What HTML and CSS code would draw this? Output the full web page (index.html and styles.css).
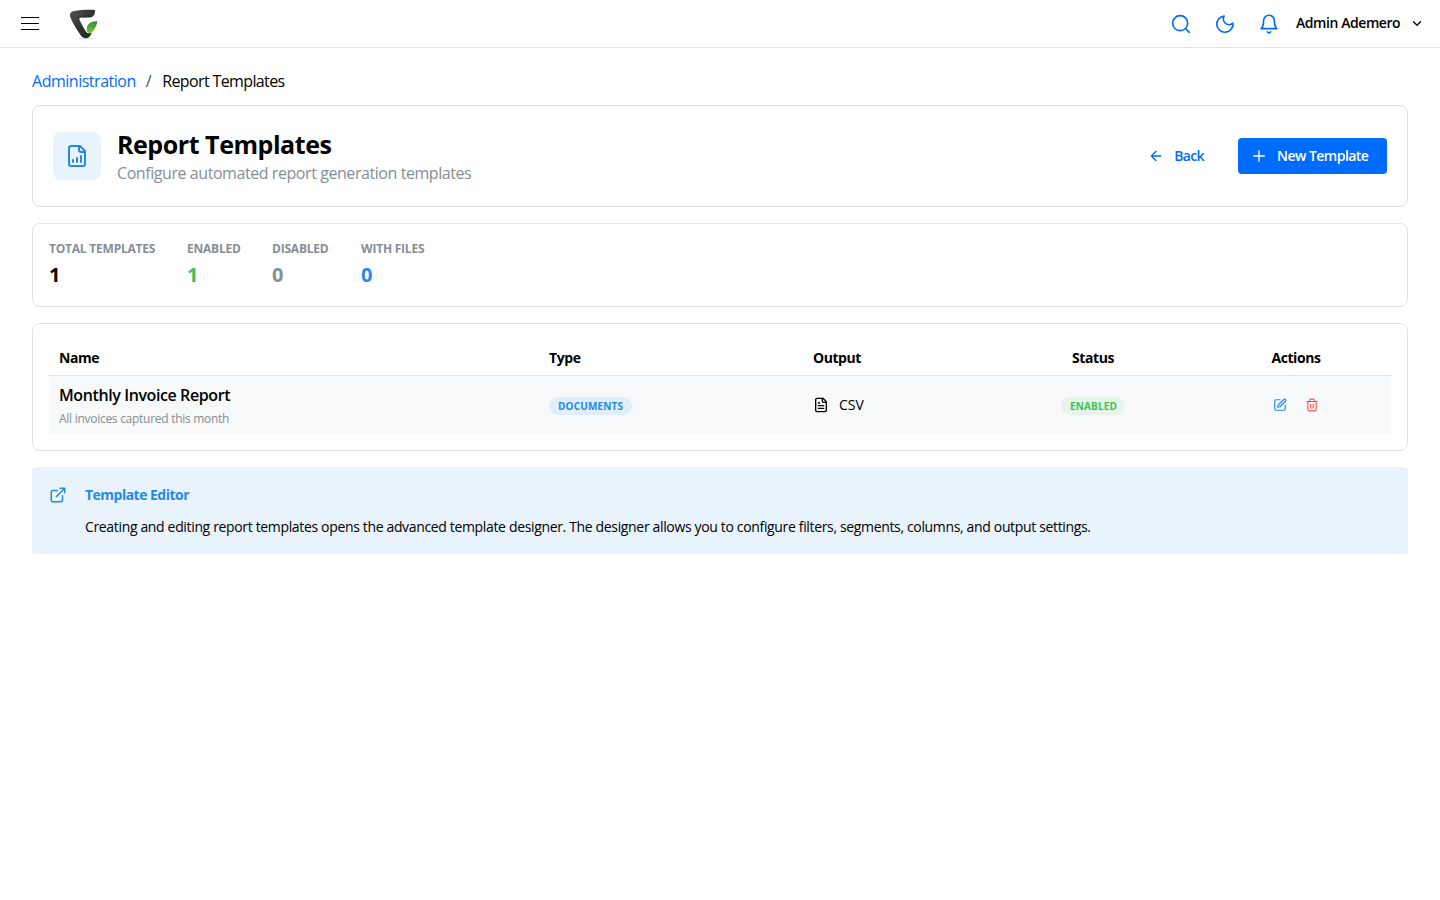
FILE: index.html
```
<!DOCTYPE html>
<html lang="en">
<head>
  <meta charset="UTF-8">
  <meta name="viewport" content="width=device-width, initial-scale=1.0">
  <title>Report Templates</title>
  <link rel="stylesheet" href="styles.css">
</head>
<body>
  <header class="topbar">
    <button class="burger" aria-label="Menu"><span></span><span></span><span></span></button>
    <svg class="logo" viewBox="0 0 32 32" aria-hidden="true">
      <defs>
        <linearGradient id="dark" x1="0" y1="0" x2="1" y2="1">
          <stop offset="0" stop-color="#555"/>
          <stop offset=".5" stop-color="#333"/>
          <stop offset="1" stop-color="#222"/>
        </linearGradient>
        <linearGradient id="leaf" x1="0" y1="0" x2="0" y2="1">
          <stop offset="0" stop-color="#2f8a3c"/>
          <stop offset="1" stop-color="#7cc52c"/>
        </linearGradient>
      </defs>
      <ellipse cx="18" cy="30.6" rx="9" ry="0.8" fill="#e4e4e4"/>
      <path fill="url(#dark)" d="M27 2C20 1.500 12 2 6 3C2.500 3.600 1.200 6.500 2.400 9.500C4.500 15 9 22 13 27.800C15.300 31 19.500 31 21.800 28.200L24.300 24.500C21.500 26 19 25.500 17.900 23.500C15.500 20 13 15 11.600 12C11 10.700 11.500 9.900 12.700 9.800L22 9.500C25.500 9.200 27.500 6 27 2Z"/>
      <path fill="url(#leaf)" d="M29.400 13.300C24.500 13.300 20.300 15.200 19.200 18.500C18.300 21.200 18.500 24 20.300 24.800C22.800 25.600 24.800 23.800 26.200 21.500C27.900 18.800 29.200 16 29.400 13.300Z"/>
    </svg>
    <div class="topbar-right">
      <svg class="icon icon-20 top-icon" viewBox="0 0 24 24"><circle cx="11" cy="11" r="9"/><path d="m22 22-4.600-4.600"/></svg>
      <svg class="icon icon-20 top-icon" viewBox="0 0 24 24"><path d="M11 2.500a6.800 6.800 0 0 0 10.500 8.400A9.700 9.700 0 1 1 11 2.500Z"/></svg>
      <svg class="icon icon-20 top-icon" viewBox="0 0 24 24"><path d="M18.500 8A6.500 6.500 0 0 0 5.500 8c0 7-3 9.500-3 9.500h19s-3-2.500-3-9.500"/><path d="M14 21.500a2.300 2.300 0 0 1-4 0"/></svg>
      <span class="user-name">Admin Ademero</span>
      <svg class="icon icon-12 user-chevron" viewBox="0 0 24 24"><path d="m5 7.500 7 7 7-7"/></svg>
    </div>
  </header>

  <main class="page">
    <nav class="breadcrumbs">
      <a href="#">Administration</a>
      <span class="separator">/</span>
      <span class="current">Report Templates</span>
    </nav>

    <section class="card page-header">
      <div class="header-icon">
        <svg class="icon icon-24" viewBox="0 0 24 24"><path d="M15 2H6a2 2 0 0 0-2 2v16a2 2 0 0 0 2 2h12a2 2 0 0 0 2-2V7Z"/><path d="M14 2v4a2 2 0 0 0 2 2h4M8 18v-2M12 18v-4M16 18v-6"/></svg>
      </div>
      <div class="header-text">
        <h1>Report Templates</h1>
        <p>Configure automated report generation templates</p>
      </div>
      <div class="header-actions">
        <button class="btn btn-subtle">
          <svg class="icon icon-16" viewBox="0 0 24 24"><path d="m12 19-7-7 7-7M19 12H5"/></svg>
          <span>Back</span>
        </button>
        <button class="btn btn-primary">
          <svg class="icon icon-16" viewBox="0 0 24 24"><path d="M4 12h16M12 4v16"/></svg>
          <span>New Template</span>
        </button>
      </div>
    </section>

    <section class="card stats">
      <div class="stat stat-total">
        <div class="stat-label">Total Templates</div>
        <div class="stat-value">1</div>
      </div>
      <div class="stat stat-enabled">
        <div class="stat-label">Enabled</div>
        <div class="stat-value green">1</div>
      </div>
      <div class="stat stat-disabled">
        <div class="stat-label">Disabled</div>
        <div class="stat-value gray">0</div>
      </div>
      <div class="stat stat-files">
        <div class="stat-label">With Files</div>
        <div class="stat-value blue">0</div>
      </div>
    </section>

    <section class="card table-card">
      <table class="table">
        <thead>
          <tr>
            <th class="col-name">Name</th>
            <th class="col-type">Type</th>
            <th class="col-output">Output</th>
            <th class="col-status">Status</th>
            <th class="col-actions">Actions</th>
          </tr>
        </thead>
        <tbody>
          <tr>
            <td>
              <div class="row-name">Monthly Invoice Report</div>
              <div class="row-desc">All invoices captured this month</div>
            </td>
            <td><span class="badge badge-blue">Documents</span></td>
            <td>
              <div class="output">
                <svg class="icon icon-16" viewBox="0 0 24 24"><path d="M15 2H6a2 2 0 0 0-2 2v16a2 2 0 0 0 2 2h12a2 2 0 0 0 2-2V7Z"/><path d="M14 2v4a2 2 0 0 0 2 2h4M10 9H8M16 13H8M16 17H8"/></svg>
                <span>CSV</span>
              </div>
            </td>
            <td class="center"><span class="badge badge-green">Enabled</span></td>
            <td class="center">
              <div class="actions">
                <svg class="icon icon-14 edit" viewBox="0 0 24 24"><path d="M12 3H5a2 2 0 0 0-2 2v14a2 2 0 0 0 2 2h14a2 2 0 0 0 2-2v-7"/><path d="M18.400 2.600a2.100 2.100 0 0 1 3 3l-9 9a2 2 0 0 1-.9.5l-2.900.8a.5.5 0 0 1-.6-.6l.8-2.900a2 2 0 0 1 .5-.9z"/></svg>
                <svg class="icon icon-14 delete" viewBox="0 0 24 24"><path d="M3 6h18M19 6v14a2 2 0 0 1-2 2H7a2 2 0 0 1-2-2V6M8 6V4a2 2 0 0 1 2-2h4a2 2 0 0 1 2 2v2M10 11v6M14 11v6"/></svg>
              </div>
            </td>
          </tr>
        </tbody>
      </table>
    </section>

    <section class="alert">
      <svg class="icon icon-18" viewBox="0 0 24 24"><path d="M15 3h6v6M10 14 21 3M18 13v6a2 2 0 0 1-2 2H5a2 2 0 0 1-2-2V8a2 2 0 0 1 2-2h6"/></svg>
      <div class="alert-body">
        <div class="alert-title">Template Editor</div>
        <div class="alert-text">Creating and editing report templates opens the advanced template designer. The designer allows you to configure filters, segments, columns, and output settings.</div>
      </div>
    </section>
  </main>
</body>
</html>
```

FILE: styles.css
```
* {
  box-sizing: border-box;
}

body {
  margin: 0;
  font-family: "Open Sans", "Noto Sans", sans-serif;
  font-size: 16px;
  letter-spacing: -0.027em;
  color: #000;
  background-color: #fff;
}

h1,
p {
  margin: 0;
}

button {
  font-family: inherit;
  letter-spacing: inherit;
  border: none;
  background: none;
  padding: 0;
  cursor: pointer;
}

/* Icons */
.icon {
  flex: none;
  display: block;
  fill: none;
  stroke: currentColor;
  stroke-width: 2;
  stroke-linecap: round;
  stroke-linejoin: round;
}

.icon-12 { width: 12px; height: 12px; }
.icon-14 { width: 14px; height: 14px; }
.icon-16 { width: 16px; height: 16px; }
.icon-18 { width: 18px; height: 18px; }
.icon-20 { width: 20px; height: 20px; }
.icon-24 { width: 24px; height: 24px; }

/* Top bar */
.topbar {
  display: flex;
  align-items: center;
  height: 48px;
  padding: 0 17px 0 21px;
  border-bottom: 1px solid #dee2e6;
}

.burger {
  display: flex;
  flex-direction: column;
  gap: 5px;
  width: 18px;
}

.burger span {
  height: 1px;
  background-color: #000;
}

.logo {
  width: 32px;
  height: 32px;
  margin-left: 29px;
}

.topbar-right {
  display: flex;
  align-items: center;
  margin-left: auto;
}

.top-icon {
  margin-right: 24px;
  color: #006bff;
}

.top-icon:nth-child(3) {
  margin-right: 17px;
}

.user-name {
  width: 105px;
  padding-bottom: 2px;
  font-size: 14px;
  font-weight: 600;
  white-space: nowrap;
}

.user-chevron {
  margin-left: 10px;
  stroke-width: 2.5;
}

/* Page */
.page {
  display: flex;
  flex-direction: column;
  gap: 16px;
  padding: 21px 32px;
}

.breadcrumbs {
  display: flex;
  align-items: center;
  height: 24px;
  margin-bottom: -4px;
  letter-spacing: -0.03em;
  white-space: nowrap;
}

.breadcrumbs a {
  color: #006bff;
  text-decoration: none;
}

.separator {
  margin: 0 11px 0 10px;
  color: #495057;
}

.current {
  letter-spacing: -0.039em;
}

.card {
  border: 1px solid #dee2e6;
  border-radius: 8px;
}

.page-header {
  display: flex;
  align-items: center;
  height: 102px;
  padding: 0 20px;
}

.header-icon {
  display: flex;
  align-items: center;
  justify-content: center;
  width: 48px;
  height: 48px;
  margin-right: 16px;
  border-radius: 8px;
  color: #228be6;
  background-color: #e8f3fc;
}

.header-text h1 {
  font-size: 25px;
  font-weight: 700;
  letter-spacing: -0.018em;
  line-height: 33px;
}

.header-text p {
  margin-top: 1px;
  line-height: 22px;
  color: #868e96;
}

.header-actions {
  display: flex;
  gap: 16px;
  margin-left: auto;
}

.btn {
  display: flex;
  align-items: center;
  height: 36px;
  padding: 0 18px;
  border-radius: 4px;
  font-size: 14px;
  font-weight: 600;
  white-space: nowrap;
}

.btn span {
  padding-bottom: 1px;
}

.btn-subtle {
  letter-spacing: -0.045em;
  color: #006bff;
}

.btn-subtle .icon {
  margin-right: 10px;
}

.btn-primary {
  width: 149px;
  padding: 0 13px;
  letter-spacing: -0.038em;
  color: #fff;
  background-color: #006bff;
}

.btn-primary .icon {
  margin-right: 10px;
}

/* Stats */
.stats {
  display: flex;
  gap: 32px;
  height: 84px;
  padding: 16px;
}

.stat-label {
  font-size: 12px;
  font-weight: 700;
  letter-spacing: -0.018em;
  line-height: 17px;
  text-transform: uppercase;
  white-space: nowrap;
  color: #868e96;
}

.stat-value {
  margin-top: 2px;
  font-size: 20px;
  font-weight: 700;
  line-height: 31px;
}

.stat-total { width: 106px; }
.stat-enabled { width: 53px; }
.stat-disabled { width: 57px; }

.green { color: #40c057; }
.gray { color: #868e96; }
.blue { color: #228be6; }

/* Table */
.table-card {
  height: 128px;
  padding: 16px;
}

.table {
  width: 100%;
  table-layout: fixed;
  border-collapse: separate;
  border-spacing: 0;
}

.table th {
  height: 36px;
  padding: 0 10px;
  border-bottom: 1px solid #dee2e6;
  font-size: 14px;
  font-weight: 700;
  text-align: left;
}

.table td {
  height: 58px;
  padding: 0 10px;
  background-color: #f8f9fa;
}

.col-name { width: 490px; }
.col-type { width: 264px; }
.col-output { width: 182px; }
.col-status { width: 216px; }

.table .col-status,
.table .col-actions,
.center {
  text-align: center;
}

.row-name {
  padding-top: 2px;
  font-weight: 600;
  letter-spacing: -0.025em;
  line-height: 25px;
}

.row-desc {
  font-size: 12px;
  letter-spacing: -0.023em;
  line-height: 21px;
  color: #868e96;
}

.badge {
  display: inline-block;
  height: 18px;
  margin-bottom: 1px;
  padding: 0 9px;
  border-radius: 9px;
  font-size: 10px;
  font-weight: 700;
  letter-spacing: 0.015em;
  line-height: 18px;
  text-transform: uppercase;
  vertical-align: middle;
}

.badge-blue {
  color: #228be6;
  background-color: #e1eef8;
}

.badge-green {
  padding: 0 8px 0 9px;
  color: #40c057;
  background-color: #e6f4ea;
}

.output {
  display: flex;
  align-items: center;
  gap: 10px;
  font-size: 14px;
  letter-spacing: 0;
}

.output span {
  padding-bottom: 1px;
}

.actions {
  display: flex;
  justify-content: center;
  gap: 18px;
}

.edit { color: #228be6; }
.delete { color: #fa5252; }

/* Info alert */
.alert {
  display: flex;
  height: 87px;
  padding: 18px 17px;
  border-radius: 4px;
  background-color: #e8f3fc;
}

.alert > .icon {
  margin-top: 1px;
  margin-right: 18px;
  color: #228be6;
}

.alert-title {
  margin-bottom: 12px;
  font-size: 14px;
  font-weight: 700;
  letter-spacing: -0.037em;
  line-height: 20px;
  color: #228be6;
}

.alert-text {
  font-size: 14px;
  letter-spacing: -0.0246em;
  line-height: 20px;
  white-space: nowrap;
}
```
